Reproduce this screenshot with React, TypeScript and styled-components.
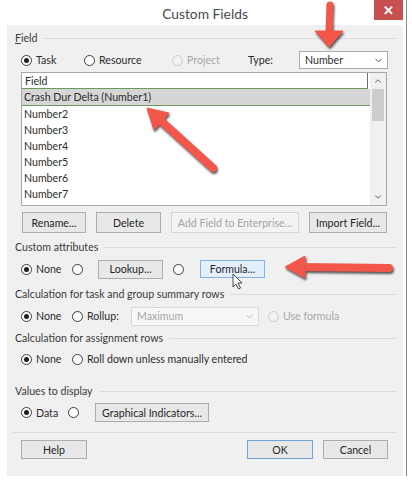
import React from "react";
import styled, { createGlobalStyle } from "styled-components";
import { ChevronDown, ChevronUp } from "lucide-react";

const GlobalStyle = createGlobalStyle`
  html, body {
    margin: 0;
    padding: 0;
    background: #fff;
  }
  body {
    font-family: Lato, "Noto Sans", sans-serif;
    font-size: 10.6px;
    color: #2c2c2c;
  }
`;

type Variant = "normal" | "disabled" | "hot" | "default";

const Screen = styled.div`
  position: relative;
  width: 412px;
  height: 480px;
  overflow: hidden;
  background: #fff;
`;

const Window = styled.div`
  width: 407px;
  height: 476px;
  box-sizing: border-box;
  padding: 0 3px 0 7px;
  border-right: 1px solid #8c8c8c;
  display: flex;
  flex-direction: column;
`;

const TitleBar = styled.div`
  height: 25px;
  display: grid;
  grid-template-columns: 30px 1fr 30px;
  align-items: start;
`;

const Title = styled.div`
  grid-column: 2;
  align-self: center;
  text-align: center;
  font-size: 13.8px;
  color: #4a4a4a;
  padding-top: 1px;
`;

const CloseButton = styled.div`
  grid-column: 3;
  height: 20px;
  margin-left: 1px;
  background: #c75050;
  color: #fff;
  font-family: "Noto Sans", sans-serif;
  font-size: 13px;
  font-weight: bold;
  display: flex;
  align-items: center;
  justify-content: center;
`;

const Body = styled.div`
  flex: 1;
  background: #f0f0f0;
  box-sizing: border-box;
  padding: 5px 7px 0 8px;
  display: flex;
  flex-direction: column;
`;

const GroupHeader = styled.div<{ $mt?: number }>`
  height: 16px;
  margin-top: ${(p) => p.$mt ?? 0}px;
  display: flex;
  align-items: center;
  color: #3a3a3a;
  &::after {
    content: "";
    flex: 1;
    margin-left: 6px;
    border-top: 1px solid #dcdcdc;
  }
`;

const Row = styled.div<{ $mt: number; $h: number }>`
  height: ${(p) => p.$h}px;
  margin: ${(p) => p.$mt}px 9px 0 6px;
  display: flex;
  align-items: center;
`;

const Option = styled.label<{ $w?: number; $disabled?: boolean }>`
  ${(p) => (p.$w ? `width: ${p.$w}px; flex: none;` : "")}
  display: flex;
  align-items: center;
  gap: 4px;
  color: ${(p) => (p.$disabled ? "#a8a8a8" : "#2c2c2c")};
  white-space: nowrap;
`;

const RadioCircle = styled.span<{ $checked?: boolean; $disabled?: boolean }>`
  width: 11px;
  height: 11px;
  box-sizing: border-box;
  border-radius: 50%;
  border: 1px solid ${(p) => (p.$disabled ? "#cacaca" : "#3c3c3c")};
  background: ${(p) => (p.$disabled ? "#f2f2f2" : "#fff")};
  display: flex;
  align-items: center;
  justify-content: center;
  flex: none;
  &::after {
    content: "";
    display: ${(p) => (p.$checked ? "block" : "none")};
    width: 5px;
    height: 5px;
    border-radius: 50%;
    background: #1e1e1e;
  }
`;

const Button = styled.div<{ $w: number; $h?: number; $variant?: Variant; $ml?: number }>`
  width: ${(p) => p.$w}px;
  height: ${(p) => p.$h ?? 19}px;
  margin-left: ${(p) => p.$ml ?? 0}px;
  flex: none;
  box-sizing: border-box;
  display: flex;
  align-items: center;
  justify-content: center;
  white-space: nowrap;
  border: 1px solid
    ${(p) =>
      p.$variant === "disabled"
        ? "#d6d6d6"
        : p.$variant === "hot"
        ? "#7eb4ea"
        : p.$variant === "default"
        ? "#6ea2d8"
        : "#adadad"};
  background: ${(p) =>
    p.$variant === "disabled" ? "#f3f3f3" : p.$variant === "hot" ? "#e3f0fb" : "#e8e8e8"};
  color: ${(p) => (p.$variant === "disabled" ? "#a3a3a3" : "#262626")};
`;

const Select = styled.div<{ $w: number; $h?: number; $disabled?: boolean }>`
  width: ${(p) => p.$w}px;
  height: ${(p) => p.$h ?? 18}px;
  flex: none;
  box-sizing: border-box;
  border: 1px solid ${(p) => (p.$disabled ? "#d9d9d9" : "#acacac")};
  background: ${(p) => (p.$disabled ? "#f7f7f7" : "#fff")};
  color: ${(p) => (p.$disabled ? "#a6a6a6" : "#2c2c2c")};
  display: flex;
  align-items: center;
  justify-content: space-between;
  padding: 0 3px 0 5px;
`;

const FieldLabel = styled.span<{ $w: number }>`
  width: ${(p) => p.$w}px;
  flex: none;
`;

const Spacer = styled.span<{ $w: number }>`
  width: ${(p) => p.$w}px;
  flex: none;
`;

const ListBox = styled.div`
  height: 134px;
  margin: 3px 9px 0 6px;
  box-sizing: border-box;
  border: 1px solid #a9a9a9;
  background: #fff;
  display: grid;
  grid-template-columns: 1fr 16px;
  overflow: hidden;
`;

const ListItems = styled.div`
  display: flex;
  flex-direction: column;
  overflow: hidden;
`;

const ListHeader = styled.div`
  height: 16px;
  flex: none;
  box-sizing: border-box;
  margin-right: 2px;
  padding-left: 3px;
  border-right: 1px solid #707070;
  border-bottom: 1px solid #6a9b5c;
  display: flex;
  align-items: center;
`;

const ListRow = styled.div<{ $selected?: boolean }>`
  height: ${(p) => (p.$selected ? 17 : 16)}px;
  flex: none;
  box-sizing: border-box;
  padding-left: 2px;
  display: flex;
  align-items: center;
  background: ${(p) => (p.$selected ? "#d6d6d6" : "#fff")};
  border-bottom: ${(p) => (p.$selected ? "1px solid #6a9b5c" : "none")};
`;

const ScrollBar = styled.div`
  background: #f0f0f0;
  display: flex;
  flex-direction: column;
  align-items: center;
`;

const ScrollArrow = styled.div`
  height: 16px;
  flex: none;
  display: flex;
  align-items: center;
  justify-content: center;
  color: #606060;
`;

const ScrollThumb = styled.div`
  width: 12px;
  height: 32px;
  background: #cdcdcd;
`;

const ScrollTrack = styled.div`
  flex: 1;
`;

const ButtonRow = styled.div<{ $mt: number }>`
  height: 21px;
  margin: ${(p) => p.$mt}px 9px 0 7px;
  display: flex;
  justify-content: space-between;
`;

const Divider = styled.div`
  margin: 10px 0 0 -2px;
  border-top: 1px solid #dcdcdc;
`;

const Footer = styled.div`
  height: 19px;
  margin: 7px 9px 0 6px;
  display: flex;
  align-items: center;
`;

const Overlay = styled.svg`
  position: absolute;
  left: 0;
  top: 0;
  pointer-events: none;
`;

const ArrowGroup = styled.g`
  filter: drop-shadow(1px 2px 1.2px rgba(0, 0, 0, 0.65));
`;

const Radio: React.FC<{ checked?: boolean; disabled?: boolean; w?: number; children?: React.ReactNode }> = ({
  checked,
  disabled,
  w,
  children,
}) => (
  <Option $w={w} $disabled={disabled}>
    <RadioCircle $checked={checked} $disabled={disabled} />
    {children}
  </Option>
);

const numbers = ["Number2", "Number3", "Number4", "Number5", "Number6", "Number7", "Number8"];

const Arrows: React.FC = () => (
  <Overlay width={412} height={480} viewBox="0 0 412 480">
    <ArrowGroup fill="#f2574a" stroke="#f2574a">
      <line x1={330} y1={5} x2={329} y2={33} strokeWidth={7} strokeLinecap="round" />
      <polygon points="315,31 343,31 329,47" strokeWidth={1} strokeLinejoin="round" />
    </ArrowGroup>
    <ArrowGroup fill="#f2574a" stroke="#f2574a">
      <line x1={213} y1={168} x2={160} y2={120} strokeWidth={8} strokeLinecap="round" />
      <polygon points="147,108 169,113 154,130" strokeWidth={1} strokeLinejoin="round" />
    </ArrowGroup>
    <ArrowGroup fill="#f2574a" stroke="#f2574a">
      <line x1={389} y1={268} x2={300} y2={267} strokeWidth={8} strokeLinecap="round" />
      <polygon points="285,267 305,256 305,278" strokeWidth={1} strokeLinejoin="round" />
    </ArrowGroup>
    <path
      d="M233 274 L233 287 L236 284 L238.5 289 L240.5 288 L238 283 L242 283 Z"
      fill="#fff"
      stroke="#333"
      strokeWidth={0.9}
      strokeLinejoin="round"
    />
  </Overlay>
);

export default function App() {
  return (
    <Screen>
      <GlobalStyle />
      <Window>
        <TitleBar>
          <Title>Custom Fields</Title>
          <CloseButton>✕</CloseButton>
        </TitleBar>
        <Body>
          <GroupHeader>
            <span>
              <u>F</u>ield
            </span>
          </GroupHeader>
          <Row $mt={5} $h={18}>
            <Radio checked w={63}>
              Task
            </Radio>
            <Radio w={88}>Resource</Radio>
            <Radio disabled w={76}>
              Project
            </Radio>
            <FieldLabel $w={51}>Type:</FieldLabel>
            <Select $w={89}>
              Number
              <ChevronDown size={11} strokeWidth={2} color="#444" />
            </Select>
          </Row>
          <ListBox>
            <ListItems>
              <ListHeader>Field</ListHeader>
              <ListRow $selected>Crash Dur Delta (Number1)</ListRow>
              {numbers.map((n) => (
                <ListRow key={n}>{n}</ListRow>
              ))}
            </ListItems>
            <ScrollBar>
              <ScrollArrow>
                <ChevronUp size={10} strokeWidth={2.4} />
              </ScrollArrow>
              <ScrollThumb />
              <ScrollTrack />
              <ScrollArrow>
                <ChevronDown size={10} strokeWidth={2.4} />
              </ScrollArrow>
            </ScrollBar>
          </ListBox>
          <ButtonRow $mt={6}>
            <Button $w={64} $h={21}>Rename...</Button>
            <Button $w={65} $h={21}>Delete</Button>
            <Button $w={128} $h={21} $variant="disabled">
              Add Field to Enterprise...
            </Button>
            <Button $w={78} $h={21}>Import Field...</Button>
          </ButtonRow>

          <GroupHeader $mt={6}>Custom attributes</GroupHeader>
          <Row $mt={4} $h={20}>
            <Radio checked w={51}>
              None
            </Radio>
            <Radio w={26} />
            <Button $w={65}>Lookup...</Button>
            <Spacer $w={10} />
            <Radio w={27} />
            <Button $w={65} $h={18} $variant="hot">
              Formula...
            </Button>
          </Row>

          <GroupHeader $mt={7}>Calculation for task and group summary rows</GroupHeader>
          <Row $mt={4} $h={20}>
            <Radio checked w={51}>
              None
            </Radio>
            <Radio w={59}>Rollup:</Radio>
            <Select $w={128} $h={19} $disabled>
              Maximum
              <ChevronDown size={11} strokeWidth={2} color="#b0b0b0" />
            </Select>
            <Spacer $w={9} />
            <Radio disabled>Use formula</Radio>
          </Row>

          <GroupHeader $mt={4}>Calculation for assignment rows</GroupHeader>
          <Row $mt={4} $h={18}>
            <Radio checked w={51}>
              None
            </Radio>
            <Radio>Roll down unless manually entered</Radio>
          </Row>

          <GroupHeader $mt={15}>Values to display</GroupHeader>
          <Row $mt={4} $h={19}>
            <Radio checked w={47}>
              Data
            </Radio>
            <Radio w={27} />
            <Button $w={114}>Graphical Indicators...</Button>
          </Row>

          <Divider />
          <Footer>
            <Button $w={66}>Help</Button>
            <Button $w={66} $ml={160} $variant="default">
              OK
            </Button>
            <Button $w={65} $ml={10}>
              Cancel
            </Button>
          </Footer>
        </Body>
      </Window>
      <Arrows />
    </Screen>
  );
}
